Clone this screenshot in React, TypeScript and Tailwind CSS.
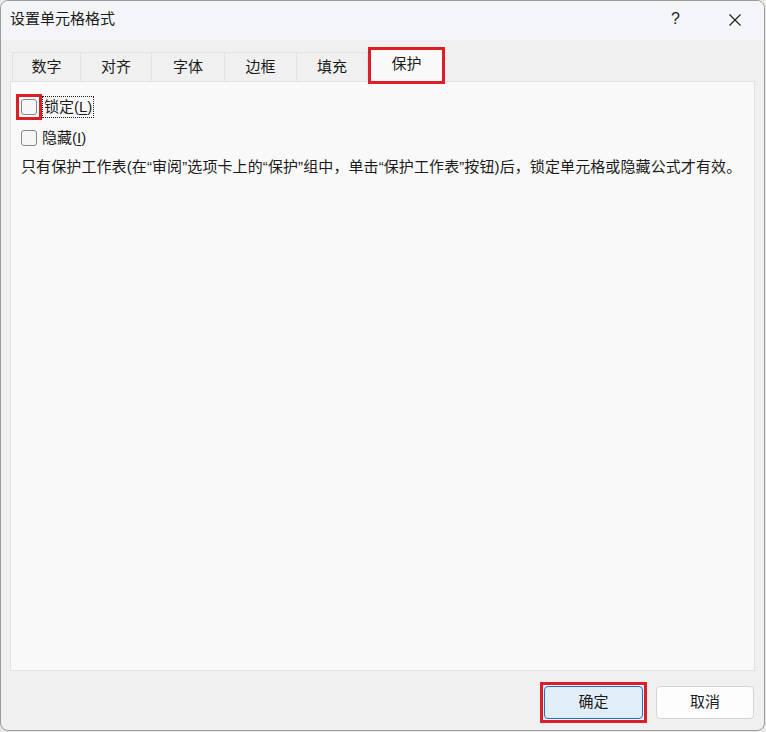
import React from 'react';

const tabs = [
  { label: '数字', w: 'w-[69px]' },
  { label: '对齐', w: 'w-[71px]' },
  { label: '字体', w: 'w-[73px]' },
  { label: '边框', w: 'w-[72px]' },
  { label: '填充', w: 'w-[71px]' },
];

function CheckBox() {
  return <span className="block h-[16px] w-[16px] shrink-0 rounded-[3px] border border-[#878787] bg-[#f6f6f6]" />;
}

export default function App() {
  return (
    <div className="h-[732px] w-[766px] bg-[#e9e9e9] font-['Liberation_Sans','Noto_Sans_CJK_SC',sans-serif] text-[15px] text-[#1b1b1b]">
      <div className="flex h-[731px] w-[765px] flex-col overflow-hidden rounded-[8px] border border-[#9c9c9c] bg-[#f0f0f0]">
        {/* title bar */}
        <div className="flex h-[39px] shrink-0 items-start bg-[#f3f5f9] pl-[9px] pt-[7px]">
          <span className="leading-[22px]">设置单元格格式</span>
          <span className="ml-auto mr-[49px] leading-[22px] text-[16px]">?</span>
          <svg width="12" height="12" viewBox="0 0 12 12" className="mr-[23px] mt-[6px]">
            <path d="M0.5 0.5 L11.5 11.5 M11.5 0.5 L0.5 11.5" stroke="#1b1b1b" strokeWidth="1.1" />
          </svg>
        </div>

        {/* tab strip */}
        <div className="mt-[7px] flex items-end pl-[11px]">
          {tabs.map((t) => (
            <div
              key={t.label}
              className={`${t.w} flex h-[29px] items-center justify-center border-t border-r border-[#e1e1e1] first:border-l`}
            >
              {t.label}
            </div>
          ))}
          <div className="relative z-10 -mb-[3px] flex h-[37px] w-[77px] items-center justify-center border-[3px] border-[#dc1f26] bg-[#f9f9f9] pb-[2px]">
            保护
          </div>
        </div>

        {/* panel */}
        <div className="mx-[9px] flex h-[590px] flex-col border border-[#e2e2e2] bg-[#f9f9f9] pl-[10px] pt-[15px]">
          <div className="flex h-[20px] items-center">
            <span className="-my-[5px] -ml-[5px] block border-[3px] border-[#dc1f26] p-[2px]">
              <CheckBox />
            </span>
            <span className="border border-dotted border-[#222] px-[1px] leading-[20px]">
              锁定(<span className="underline underline-offset-2">L</span>)
            </span>
          </div>
          <div className="mt-[11px] flex h-[20px] items-center gap-[5px]">
            <CheckBox />
            <span className="leading-[20px]">
              隐藏(<span className="underline underline-offset-2">I</span>)
            </span>
          </div>
          <p className="mt-[8px] leading-[22px] tracking-[0.1px]">
            只有保护工作表(在“审阅”选项卡上的“保护”组中，单击“保护工作表”按钮)后，锁定单元格或隐藏公式才有效。
          </p>
        </div>

        {/* buttons */}
        <div className="mt-[15px] flex items-center justify-end gap-[13px] pr-[10px]">
          <div className="-m-[4px] border-[3px] border-[#dc1f26] p-[1px]">
            <button className="block h-[33px] w-[99px] rounded-[4px] border border-[#1d6fc4] bg-[#e0eef9]">确定</button>
          </div>
          <button className="h-[33px] w-[98px] rounded-[4px] border border-[#d3d3d3] bg-[#fdfdfd]">取消</button>
        </div>
      </div>
    </div>
  );
}
